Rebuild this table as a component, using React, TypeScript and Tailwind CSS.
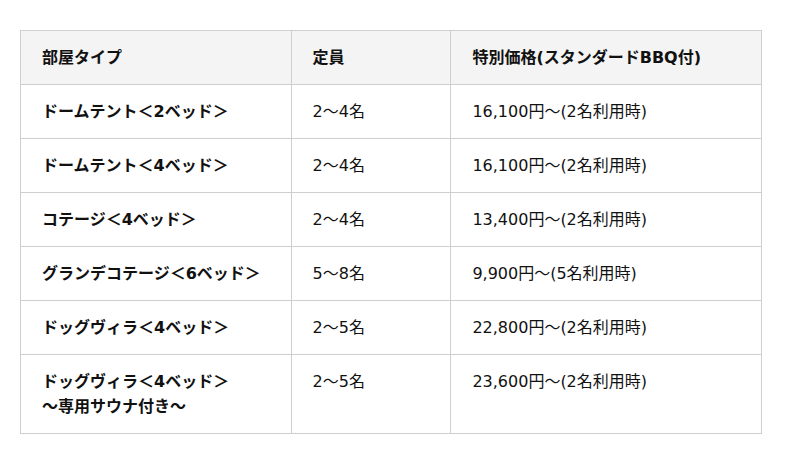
import React from "react";

const rows: { type: string[]; cap: string; price: string }[] = [
  { type: ["ドームテント＜2ベッド＞"], cap: "2～4名", price: "16,100円～(2名利用時)" },
  { type: ["ドームテント＜4ベッド＞"], cap: "2～4名", price: "16,100円～(2名利用時)" },
  { type: ["コテージ＜4ベッド＞"], cap: "2～4名", price: "13,400円～(2名利用時)" },
  { type: ["グランデコテージ＜6ベッド＞"], cap: "5～8名", price: "9,900円～(5名利用時)" },
  { type: ["ドッグヴィラ＜4ベッド＞"], cap: "2～5名", price: "22,800円～(2名利用時)" },
  { type: ["ドッグヴィラ＜4ベッド＞", "～専用サウナ付き～"], cap: "2～5名", price: "23,600円～(2名利用時)" },
];

export default function App() {
  return (
    <div
      className="w-[800px] h-[464px] bg-white pt-[30px] pl-[20px]"
      style={{ fontFamily: '"DejaVu Sans", "Noto Sans CJK JP", sans-serif' }}
    >
      <table className="border-collapse w-[742px] text-[16px] leading-[25px] text-[#111]">
        <colgroup>
          <col className="w-[271px]" />
          <col className="w-[160px]" />
          <col className="w-[311px]" />
        </colgroup>
        <thead>
          <tr className="bg-[#f4f4f4]">
            <th className="border border-[#cfcfcf] px-[21px] py-[14px] text-left font-bold align-top">部屋タイプ</th>
            <th className="border border-[#cfcfcf] px-[21px] py-[14px] text-left font-bold align-top">定員</th>
            <th className="border border-[#cfcfcf] px-[21px] py-[14px] text-left font-bold align-top">特別価格(スタンダードBBQ付)</th>
          </tr>
        </thead>
        <tbody>
          {rows.map((r, i) => (
            <tr key={i}>
              <td className="border border-[#cfcfcf] px-[21px] py-[14px] font-bold align-top">
                {r.type.map((t, j) => (
                  <div key={j}>{t}</div>
                ))}
              </td>
              <td className="border border-[#cfcfcf] px-[21px] py-[14px] align-top">{r.cap}</td>
              <td className="border border-[#cfcfcf] px-[21px] py-[14px] align-top">{r.price}</td>
            </tr>
          ))}
        </tbody>
      </table>
    </div>
  );
}
